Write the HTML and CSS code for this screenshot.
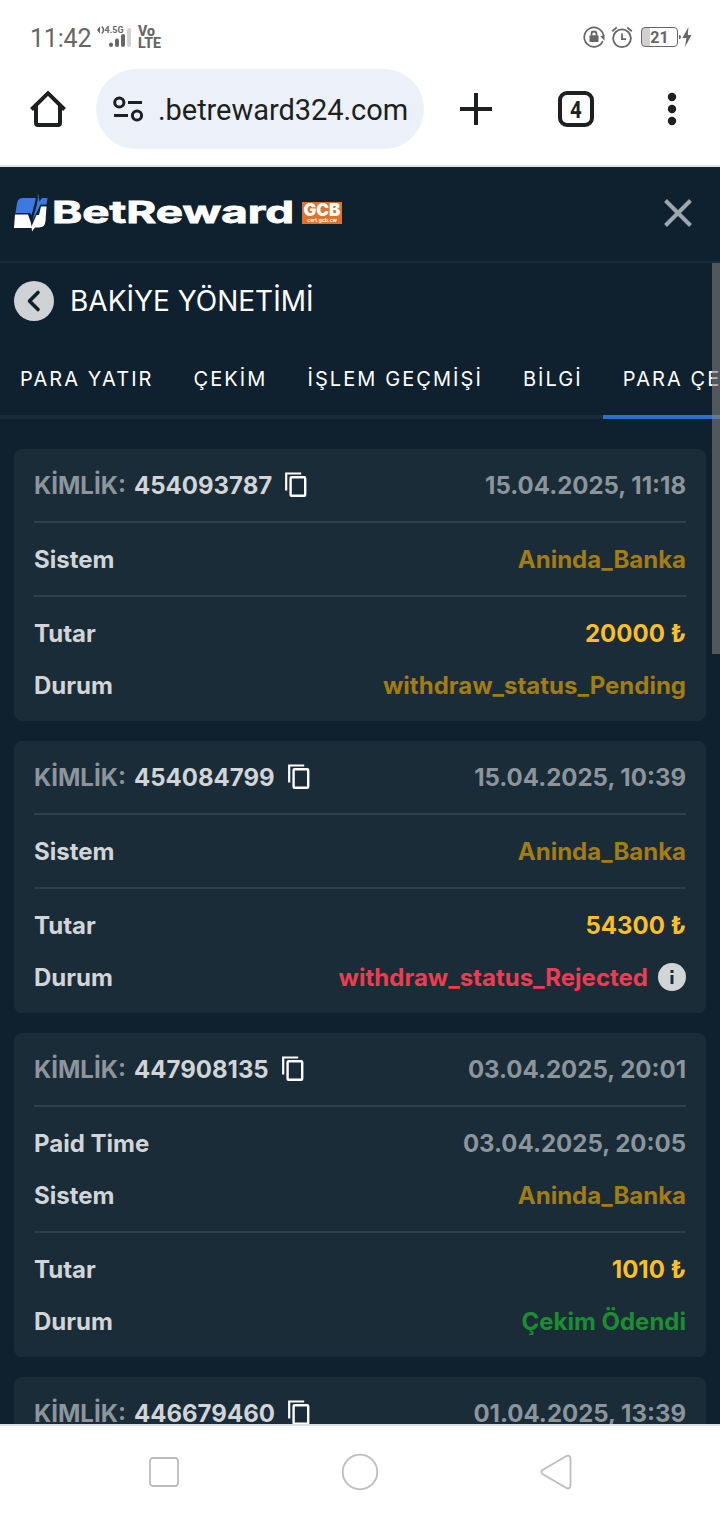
FILE: index.html
```html
<!DOCTYPE html>
<html lang="tr">
<head>
  <meta charset="UTF-8">
  <title>BetReward - Bakiye Yönetimi</title>
  <meta name="viewport" content="width=device-width, initial-scale=1.0">
  <link rel="stylesheet" href="styles.css">
</head>
<body>
  <svg class="sprite" width="0" height="0">
    <symbol id="copy" viewBox="0 0 24 28">
      <path d="M1.200 19.500V2.500h15" fill="none" stroke="#fff" stroke-width="2.200"/>
      <rect x="5.600" y="6.200" width="14.600" height="18.600" rx="1" fill="none" stroke="#fff" stroke-width="2.400"/>
    </symbol>
  </svg>

  <div class="status-bar">
    <span class="clock">11:42</span>
    <svg class="signal" width="36" height="24" viewBox="0 0 36 24">
      <path d="M3 1.500 0 5l3 3.500z" fill="#666"/>
      <path d="M4.800 1.500q3.500 3.500 0 7" fill="none" stroke="#666" stroke-width="1.500"/>
      <text class="net" x="7.500" y="7.500" textLength="19" lengthAdjust="spacingAndGlyphs">4.5G</text>
      <path d="M14 20v-.5M20 20v-4.500M26 20v-9" stroke="#666" stroke-width="4" stroke-linecap="round"/>
      <path d="M32 20V5" stroke="#d2d2d2" stroke-width="4" stroke-linecap="round"/>
    </svg>
    <svg class="volte" width="24" height="24" viewBox="0 0 24 24">
      <text x="0" y="10.500" textLength="17" lengthAdjust="spacingAndGlyphs">Vo</text>
      <text x="0" y="22.500" textLength="23" lengthAdjust="spacingAndGlyphs">LTE</text>
    </svg>
    <div class="status-right">
      <svg width="22" height="22" viewBox="0 0 22 22">
        <path d="M19.800 15.200A9.700 9.700 0 1 1 20.600 10" fill="none" stroke="#666" stroke-width="1.700"/>
        <path d="m17.500 10.500 4-1.700v6z" fill="#666"/>
        <rect x="6.500" y="9.300" width="9" height="6.700" rx="1" fill="#666"/>
        <path d="M8.500 9.500V8a2.500 2.500 0 0 1 5 0v1.500" fill="none" stroke="#666" stroke-width="1.800"/>
      </svg>
      <svg width="22" height="22" viewBox="0 0 22 22">
        <circle cx="11" cy="12.300" r="8.900" fill="none" stroke="#666" stroke-width="1.800"/>
        <path d="M11 7.500v5.600h4M1.200 5.200l4.600-3.800M20.800 5.200l-4.600-3.800" fill="none" stroke="#666" stroke-width="1.800"/>
      </svg>
      <span class="battery">21</span>
      <svg class="bolt" width="13" height="20" viewBox="0 0 13 20">
        <path d="M0 8q2-.3 2 2t-2 2z" fill="#666"/>
        <path d="M9.500 0 3.400 11h4L6 20l6.500-12H8.800z" fill="#666"/>
      </svg>
    </div>
  </div>

  <div class="browser-bar">
    <svg width="36" height="38" viewBox="0 0 36 38">
      <path d="M1.500 19.500 18 3.200l16.500 16.300M6 15.500V33q0 2 2 2h20q2 0 2-2V15.500" fill="none" stroke="#1e1f20" stroke-width="4"/>
    </svg>
    <div class="url">
      <svg width="30" height="26" viewBox="0 0 30 26">
        <g fill="none" stroke="#1e1f20" stroke-width="3">
          <circle cx="6.300" cy="6.500" r="4.600"/>
          <circle cx="24" cy="19.500" r="4.600"/>
          <path d="M15 6.500h14M1 19.500h14"/>
        </g>
      </svg>
      <span>.betreward324.com</span>
    </div>
    <svg class="plus" width="32" height="32" viewBox="0 0 32 32">
      <path d="M16 0v32M0 16h32" stroke="#1e1f20" stroke-width="4"/>
    </svg>
    <div class="tab-count"><span>4</span></div>
    <svg class="dots" width="10" height="34" viewBox="0 0 10 34">
      <g fill="#1e1f20"><circle cx="5" cy="5" r="4.200"/><circle cx="5" cy="17" r="4.200"/><circle cx="5" cy="29" r="4.200"/></g>
    </svg>
  </div>

  <div class="page">
    <header class="site-header">
      <svg class="logo" width="282" height="40" viewBox="0 0 282 40">
        <path d="M1.500 20 3 10q1-5 6-5h13l-4.500 17.500L16 20z" fill="#3b78df"/>
        <path d="m24 0 1.500 8.500L28 5h5.500l-1 6.500h-6L18.500 28 23 10.500z" fill="#3b78df"/>
        <path d="M1 21.500h13l2.500 7 1.500 6.500H0z" fill="#fff"/>
        <path d="M27 13.500h5.500L31.500 28q-.5 6.500-6.500 6.500h-4L18 38.500l-.5-5L22.500 22H25z" fill="#fff"/>
        <path d="m23.500 4-2.300 11-4 9" fill="none" stroke="#10212e" stroke-width="1.200"/>
        <text class="logo-text" x="38" y="30.300" textLength="242" lengthAdjust="spacingAndGlyphs">BetReward</text>
      </svg>
      <div class="gcb"><b>GCB</b><span>cert.gcb.cw</span></div>
      <svg class="close" width="28" height="28" viewBox="0 0 28 28">
        <path d="m1.500 1.500 25 25m0-25-25 25" stroke="#9ca6ae" stroke-width="4"/>
      </svg>
    </header>

    <div class="title-row">
      <svg width="40" height="40" viewBox="0 0 40 40">
        <circle cx="20" cy="20" r="20" fill="#cfd3d6"/>
        <path d="m24 11.500-8.500 8.500 8.500 8.500" fill="none" stroke="#10212e" stroke-width="3.600" stroke-linecap="round" stroke-linejoin="round"/>
      </svg>
      <h1>BAKİYE YÖNETİMİ</h1>
    </div>

    <nav class="tabs">
      <a>PARA YATIR</a>
      <a>ÇEKİM</a>
      <a>İŞLEM GEÇMİŞİ</a>
      <a>BİLGİ</a>
      <a class="active">PARA ÇEKME</a>
    </nav>

    <main class="list">
      <section class="card">
        <div class="group">
          <div class="row"><span class="id">KİMLİK: <b>454093787</b><svg class="copy"><use href="#copy"/></svg></span><span class="muted">15.04.2025, 11:18</span></div>
        </div>
        <div class="group">
          <div class="row"><span>Sistem</span><span class="pending">Aninda_Banka</span></div>
        </div>
        <div class="group">
          <div class="row"><span>Tutar</span><span class="amount">20000 ₺</span></div>
          <div class="row"><span>Durum</span><span class="pending">withdraw_status_Pending</span></div>
        </div>
      </section>

      <section class="card">
        <div class="group">
          <div class="row"><span class="id">KİMLİK: <b>454084799</b><svg class="copy"><use href="#copy"/></svg></span><span class="muted">15.04.2025, 10:39</span></div>
        </div>
        <div class="group">
          <div class="row"><span>Sistem</span><span class="pending">Aninda_Banka</span></div>
        </div>
        <div class="group">
          <div class="row"><span>Tutar</span><span class="amount">54300 ₺</span></div>
          <div class="row"><span>Durum</span><span class="rejected">withdraw_status_Rejected
            <svg class="info" width="28" height="28" viewBox="0 0 28 28"><circle cx="14" cy="14" r="14" fill="#d1d5d7"/><path d="M12.500 7h3v3h-3zM12.500 12h3v9h-3z" fill="#1a2c38"/></svg></span></div>
        </div>
      </section>

      <section class="card">
        <div class="group">
          <div class="row"><span class="id">KİMLİK: <b>447908135</b><svg class="copy"><use href="#copy"/></svg></span><span class="muted">03.04.2025, 20:01</span></div>
        </div>
        <div class="group">
          <div class="row"><span>Paid Time</span><span class="muted">03.04.2025, 20:05</span></div>
          <div class="row"><span>Sistem</span><span class="pending">Aninda_Banka</span></div>
        </div>
        <div class="group">
          <div class="row"><span>Tutar</span><span class="amount">1010 ₺</span></div>
          <div class="row"><span>Durum</span><span class="paid">Çekim Ödendi</span></div>
        </div>
      </section>

      <section class="card">
        <div class="group">
          <div class="row"><span class="id">KİMLİK: <b>446679460</b><svg class="copy"><use href="#copy"/></svg></span><span class="muted">01.04.2025, 13:39</span></div>
        </div>
      </section>
    </main>
    <div class="scrollbar"></div>
  </div>

  <div class="nav-bar">
    <svg width="32" height="32" viewBox="0 0 32 32"><rect x="2" y="2" width="28" height="28" rx="3" fill="none" stroke="#bdbdbd" stroke-width="1.800"/></svg>
    <svg width="38" height="38" viewBox="0 0 38 38"><circle cx="19" cy="19" r="17.300" fill="none" stroke="#bdbdbd" stroke-width="1.800"/></svg>
    <svg width="32" height="36" viewBox="0 0 32 36"><path d="M2.500 16 26 2.200Q30.300.5 30.500 4.500v27Q30.300 35.500 26 33.800L2.500 20Q.3 18 2.500 16z" fill="none" stroke="#bdbdbd" stroke-width="1.800"/></svg>
  </div>
</body>
</html>
```
FILE: styles.css
```css
* { box-sizing: border-box; }
body {
  margin: 0; width: 720px; height: 1520px; overflow: hidden;
  display: flex; flex-direction: column;
  background: #fff; font-family: Inter, "Noto Sans", sans-serif;
}
svg { display: block; flex: none; overflow: visible; }
.sprite { display: none; }

/* phone status bar */
.status-bar {
  height: 69px; padding: 5px 28px 0 30px;
  display: flex; align-items: center;
  font-family: Roboto, sans-serif; color: #666;
}
.clock { width: 67px; font-size: 25px; line-height: 30px; padding-top: 3px; letter-spacing: -0.2px; }
.net { font-size: 8.5px; font-weight: 700; fill: #666; }
.volte { margin: -1px 0 0 5px; font-size: 14.5px; font-weight: 800; fill: #666; }
.status-right { margin: 0 0 0 auto; display: flex; align-items: center; gap: 6px; }
.battery {
  width: 37px; height: 20px; margin-left: 2px;
  border: 1px solid #666; border-radius: 4px;
  background: linear-gradient(90deg, #d0d0d0 8px, #fff 8px);
  font-size: 16px; line-height: 19px; font-weight: 700; text-align: center;
}
.bolt { margin-left: -5px; }

/* browser toolbar */
.browser-bar {
  height: 98px; padding: 0 43px 16px 30px;
  display: flex; align-items: center;
  border-bottom: 2px solid #dfe2e5;
}
.url {
  width: 328px; height: 80px; margin-left: 30px; padding-left: 17px;
  display: flex; align-items: center; gap: 15px;
  background: #ebf0f9; border-radius: 40px;
  font: 29px/36px Roboto, sans-serif; letter-spacing: -0.05px; color: #1e1f20;
}
.url span { padding-top: 2px; }
.plus { margin-left: 36px; }
.tab-count {
  width: 36px; height: 36px; margin-left: 66px;
  display: flex; justify-content: center;
  border: 4px solid #1e1f20; border-radius: 9px;
  font: 700 24px/30px Roboto, sans-serif; color: #1e1f20;
}
.tab-count span { transform: scaleX(0.85); }
.dots { margin-left: auto; }

.page {
  position: relative; height: 1257px; overflow: hidden;
  background: #0f212e; color: #fff;
}
.site-header {
  height: 96px; padding: 0 28px 2px 14px;
  display: flex; align-items: center;
  border-bottom: 2px solid #1a2c38;
}
.logo-text { font-size: 30px; font-weight: 700; fill: #fff; stroke: #fff; stroke-width: 0.8px; }
.gcb {
  width: 40px; height: 22px; margin-left: 6px;
  display: flex; flex-direction: column; align-items: center;
  background: #dc7431;
}
.gcb b { font: 900 17px/16px Inter, sans-serif; }
.gcb span { font: 700 5px/5px Inter, sans-serif; }
.close { margin-left: auto; }

.title-row { height: 77px; padding: 0 14px 2px; display: flex; align-items: center; gap: 16px; }
.title-row h1 { margin: 0; font-size: 28px; line-height: 36px; font-weight: 400; }

.tabs { height: 79px; display: flex; border-bottom: 4px solid #1a2c38; }
.tabs a {
  height: 79px; padding: 0 20px; flex: none;
  font-size: 20px; line-height: 78px; letter-spacing: 2.08px;
}
.tabs .active { border-bottom: 4px solid #2872c8; }

/* withdrawal cards */
.list { padding: 30px 14px 0; display: flex; flex-direction: column; gap: 20px; }
.card {
  padding: 0 20px; background: #1a2c38; border-radius: 8px;
  font-size: 24px; line-height: 32px; font-weight: 700; color: #d1d5d7;
}
.group { padding: 21px 0 19px; display: flex; flex-direction: column; gap: 20px; }
.group + .group { border-top: 2px solid #2f404b; }
.row { height: 32px; display: flex; justify-content: space-between; align-items: center; }
.id { display: flex; align-items: center; gap: 8px; color: #8c959b; }
.id b { font-weight: 700; color: #d1d5d7; }
.copy { width: 24px; height: 28px; margin: -3px 0 0 5px; }
.muted { color: #8c959b; }
.pending { color: #a37c12; }
.amount { color: #fdbf24; }
.rejected { display: flex; align-items: center; gap: 10px; color: #f03b50; }
.info { margin-top: -2px; }
.paid { color: #1b8f30; }

.scrollbar {
  position: absolute; top: 96px; right: 0;
  width: 8px; height: 391px; background: rgba(128, 128, 128, 0.58);
}

/* android navigation buttons */
.nav-bar {
  height: 96px; padding: 0 148px 2px; flex: none;
  display: flex; align-items: center; justify-content: space-between;
  border-top: 2px solid #dfe2e5;
}
```
